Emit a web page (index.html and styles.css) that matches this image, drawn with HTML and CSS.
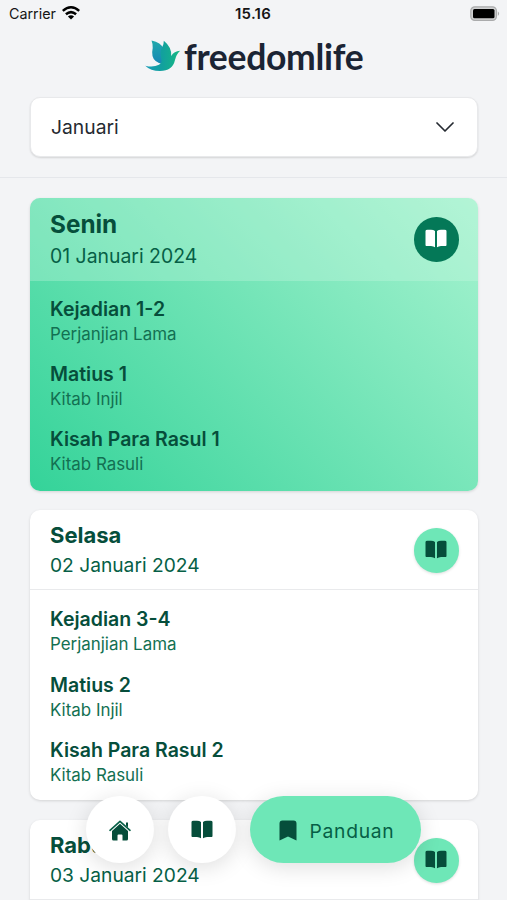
FILE: index.html
```html
<!DOCTYPE html>
<html lang="id">
<head>
<meta charset="utf-8">
<title>freedomlife</title>
<link rel="stylesheet" href="styles.css">
</head>
<body>
<svg width="0" height="0" class="defs">
  <symbol id="book" viewBox="0 0 22 20"><path d="M10 2Q8.500.8 6 .8H2.500Q.5.8.5 2V16Q.5 17 1.500 16.900H6Q8.500 17 10 18.300ZM12 2Q13.500.8 16 .8H19.500Q21.500.8 21.500 2V16Q21.500 17 20.500 16.900H16Q13.500 17 12 18.300Z"/></symbol>
</svg>
<header class="top">
  <div class="status">
    <span class="carrier">Carrier
      <svg width="18" height="14" viewBox="0 0 18 14" fill="none" stroke="#000" stroke-width="2.500"><path d="M.8 4.900Q9-2.300 17.200 4.900M3.900 8.300Q9 3.900 14.100 8.300"/><path d="M9 13.600 5.900 10.600Q9 8.100 12.100 10.600Z" fill="#000" stroke="none"/></svg>
    </span>
    <b class="time">15.16</b>
    <svg class="battery" width="31" height="16" viewBox="0 0 31 16"><rect x=".8" y=".8" width="25.600" height="13.600" rx="4" fill="#d0d1d2" stroke="#aaabac" stroke-width="1.200"/><rect x="3" y="3" width="21.500" height="9.200" rx="1.500"/><path d="M27.800 5.200Q30.500 7.600 27.800 10Z" fill="#aaabac"/></svg>
  </div>
  <div class="brand">
    <svg width="36" height="32" viewBox="0 0 36 32">
      <defs><linearGradient id="wing" x1="0" x2="1" y1="0" y2="0"><stop offset="0" stop-color="#159bb7"/><stop offset=".48" stop-color="#12a09e"/><stop offset="1" stop-color="#16b982"/></linearGradient><linearGradient id="back" x1="0" x2="0" y1="0" y2="1"><stop offset="0" stop-color="#20a9ab"/><stop offset="1" stop-color="#1686b5"/></linearGradient></defs>
      <path d="M6.500.4Q16 2.500 18.500 8.500L18 24Q9 22.500 7.500 16Q6.800 12 7.700 8Q8 4 6.500.4Z" fill="url(#back)"/>
      <path d="M18.800.8Q27 7.500 26.200 16Q29 11.200 35.200 10.800Q31.500 14 30 20Q27.500 31 15 31Q5.500 31 .3 25.700Q8 27.800 14 24.800Q17.500 22.500 16.300 18.500Q14.300 12 17.300 7Q18.900 4 18.800.8Z" fill="url(#wing)"/>
    </svg>
    <span class="wordmark">freedomlife</span>
  </div>
  <div class="select"><span>Januari</span>
    <svg width="18" height="11" viewBox="0 0 18 11" fill="none" stroke="#252a31" stroke-width="1.700" stroke-linecap="round" stroke-linejoin="round"><path d="m1 1 8 8 8-8"/></svg>
  </div>
</header>
<main class="list">
  <section class="card today">
    <div class="head"><div><h2>Senin</h2><p class="date">01 Januari 2024</p></div><span class="read"><svg width="22" height="20"><use href="#book"/></svg></span></div>
    <div class="body">
      <div class="item"><h3>Kejadian 1-2</h3><p>Perjanjian Lama</p></div>
      <div class="item"><h3>Matius 1</h3><p>Kitab Injil</p></div>
      <div class="item"><h3>Kisah Para Rasul 1</h3><p>Kitab Rasuli</p></div>
    </div>
  </section>
  <section class="card">
    <div class="head"><div><h2>Selasa</h2><p class="date">02 Januari 2024</p></div><span class="read"><svg width="22" height="20"><use href="#book"/></svg></span></div>
    <div class="body">
      <div class="item"><h3>Kejadian 3-4</h3><p>Perjanjian Lama</p></div>
      <div class="item"><h3>Matius 2</h3><p>Kitab Injil</p></div>
      <div class="item"><h3>Kisah Para Rasul 2</h3><p>Kitab Rasuli</p></div>
    </div>
  </section>
  <section class="card cut">
    <div class="head"><div><h2>Rabu</h2><p class="date">03 Januari 2024</p></div><span class="read"><svg width="22" height="20"><use href="#book"/></svg></span></div>
  </section>
</main>
<nav class="tabs">
  <span class="tab"><svg width="22" height="21" viewBox="0 0 22 21"><path d="M1 10.300 11 1.300l10 9" fill="none" stroke="#065f46" stroke-width="1.600" stroke-linecap="round" stroke-linejoin="round"/><path d="M17 2.500h2v5l-2-2ZM11 3.700l8 7.200V19q0 1.500-1.500 1.500h-4V15.500q0-1-1-1h-3q-1 0-1 1v5h-4Q3 20.500 3 19v-8.100Z"/></svg></span>
  <span class="tab"><svg width="22" height="20"><use href="#book"/></svg></span>
  <span class="tab active"><svg width="18" height="21" viewBox="0 0 18 21"><path d="M3.500.5h11q3 0 3 3v17L9 16.500.5 20.500v-17q0-3 3-3Z"/></svg><span>Panduan</span></span>
</nav>
</body>
</html>
```

FILE: styles.css
```css
* { box-sizing: border-box; }
body { margin: 0; height: 900px; overflow: hidden; background: #f3f4f6; font-family: Inter, sans-serif; color: #064e3b; }
h2, h3, p { margin: 0; }
.defs { position: absolute; }
.top { height: 178px; border-bottom: 1.500px solid #e5e7eb; }
.status { height: 28px; padding: 0 7px 1px 9px; display: grid; grid-template-columns: 226px auto 1fr; align-items: center; color: #151515; font-size: 14.300px; }
.carrier { display: flex; align-items: center; gap: 6px; }
.carrier svg { margin-top: -2px; }
.time { font-size: 15px; font-weight: 600; letter-spacing: .25px; }
.battery { justify-self: end; margin-right: -1px; }
.brand { height: 69px; padding: 12px 0 0 145px; display: flex; align-items: flex-start; gap: 3px; }
.wordmark { font: 700 35.500px/33px Lato, sans-serif; color: #1b2434; letter-spacing: -.3px; }
.select { margin: 0 30px; width: 448px; height: 60px; padding: 0 23px 0 20px; border-radius: 10px; background: #fff; border: 1px solid #e8e9eb; box-shadow: 0 1px 2px #0002; display: flex; align-items: center; justify-content: space-between; font-size: 19.300px; color: #252a31; }
.list { height: 722px; overflow: hidden; padding: 20px 29.500px 0 30px; display: flex; flex-direction: column; gap: 20px; }
.card { border-radius: 10px; background: #fff; overflow: hidden; height: 290px; flex: none; box-shadow: 0 1px 3px #0002; }
.card.cut { height: 82px; border-radius: 10px 10px 0 0; }
.head { height: 80px; padding: 1px 19px 0 20px; border-bottom: 1.500px solid #e9eaec; display: flex; justify-content: space-between; align-items: center; }
.head h2 { font-size: 22px; line-height: 30px; font-weight: 700; }
.date { font-size: 19.200px; line-height: 30px; color: #065f46; }
.read { width: 44.500px; height: 44.500px; border-radius: 50%; background: #6ee7b7; display: flex; align-items: center; justify-content: center; box-shadow: 0 1px 3px #0002; }
svg { flex: none; }
.read svg, .tab svg { fill: #064e3b; }
.body { padding: 15px 20px; }
.item { height: 65.200px; }
.item h3 { font-size: 19.500px; line-height: 28px; font-weight: 600; }
.item p { font-size: 16.900px; line-height: 23px; color: #137052; }
.today { height: 292.500px; margin-bottom: -.2px; background: linear-gradient(45deg, #34d399, #a7f3d0); }
.today .head { height: 82.500px; padding-top: 0; border: 0; background: #d1fae54d; }
.today .body { padding-top: 14px; }
.today h2 { font-size: 24.300px; line-height: 33px; }
.today .date { font-size: 19.400px; }
.today .read { background: #047857; box-shadow: none; }
.today .read svg { fill: #fff; }
.tabs { position: absolute; left: 86px; top: 796px; display: flex; gap: 14.500px; }
.tab { width: 67.500px; height: 67px; border-radius: 34px; background: #fff; display: flex; align-items: center; justify-content: center; box-shadow: 0 4px 22px #0002; }
.tab svg { margin-top: 1px; }
.tab.active { width: 171px; padding-left: 2px; background: #6ee7b7; gap: 13px; font-size: 19.300px; letter-spacing: .7px; color: #065f46; }
.tab.active span { padding-top: 2px; }
```
